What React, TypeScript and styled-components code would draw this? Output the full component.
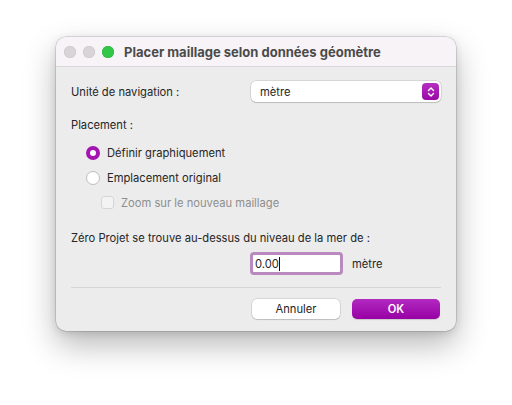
import styled, { createGlobalStyle } from "styled-components";

const Global = createGlobalStyle`
  html, body {
    margin: 0;
    padding: 0;
    background: #ffffff;
  }
  body {
    font-family: Inter, "Liberation Sans", sans-serif;
    -webkit-font-smoothing: antialiased;
  }
`;

const App: React.FC = () => {
  return (
    <>
      <Global />
      <Page>
        <Window>
          <TitleBar>
            <Light color="#d8d5d8" border="#c6c3c6" />
            <Light color="#d8d5d8" border="#c6c3c6" />
            <Light color="#33c748" border="#2aac3c" />
            <Title>Placer maillage selon données géomètre</Title>
          </TitleBar>
          <Body>
            <Row>
              <Label>Unité de navigation :</Label>
              <Select>
                <SelectText>mètre</SelectText>
                <Stepper>
                  <svg width="10" height="12" viewBox="0 0 10 12">
                    <path
                      d="M2.5 4.5 L5 2 L7.5 4.5 M2.5 7.5 L5 10 L7.5 7.5"
                      fill="none"
                      stroke="#fff"
                      strokeWidth="1.4"
                      strokeLinecap="round"
                      strokeLinejoin="round"
                    />
                  </svg>
                </Stepper>
              </Select>
            </Row>
            <Section>Placement :</Section>
            <Option first>
              <Radio checked />
              <OptionText>Définir graphiquement</OptionText>
            </Option>
            <Option>
              <Radio />
              <OptionText>Emplacement original</OptionText>
            </Option>
            <Option indent>
              <Check />
              <OptionText disabled>Zoom sur le nouveau maillage</OptionText>
            </Option>
            <Section top={16}>
              Zéro Projet se trouve au-dessus du niveau de la mer de :
            </Section>
            <InputRow>
              <Field>
                0.00
                <Caret />
              </Field>
              <Unit>mètre</Unit>
            </InputRow>
            <Divider />
            <Buttons>
              <Button>Annuler</Button>
              <Button primary>OK</Button>
            </Buttons>
          </Body>
        </Window>
      </Page>
    </>
  );
};

export default App;

const Page = styled.div`
  width: 512px;
  height: 405px;
  padding: 37px 0 0 56px;
  box-sizing: border-box;
`;

const Window = styled.div`
  width: 400px;
  height: 294px;
  border-radius: 10px;
  background: #ececec;
  overflow: hidden;
  box-shadow: 0 0 0 0.5px rgba(0, 0, 0, 0.22), 0 14px 32px rgba(0, 0, 0, 0.28),
    0 2px 8px rgba(0, 0, 0, 0.12);
`;

const TitleBar = styled.div`
  height: 29px;
  background: #f7f3f7;
  border-bottom: 1px solid #d9d6d9;
  display: flex;
  align-items: center;
  padding-left: 8px;
  gap: 7px;
`;

const Light = styled.span<{ color: string; border: string }>`
  width: 12px;
  height: 12px;
  border-radius: 50%;
  background: ${(p) => p.color};
  box-shadow: inset 0 0 0 0.5px ${(p) => p.border};
`;

const Title = styled.span`
  margin-left: 3px;
  font-size: 13px;
  font-weight: 700;
  color: #4b4b4b;
`;

const Body = styled.div`
  padding: 14px 15px 0 15px;
  display: flex;
  flex-direction: column;
  font-size: 11.2px;
`;

const Row = styled.div`
  display: flex;
  align-items: center;
  justify-content: space-between;
  height: 21px;
`;

const Label = styled.span`
  color: #262626;
`;

const Select = styled.div`
  width: 190px;
  height: 21px;
  box-sizing: border-box;
  background: #ffffff;
  border-radius: 5px;
  box-shadow: 0 0 0 0.5px rgba(0, 0, 0, 0.18), 0 1px 1px rgba(0, 0, 0, 0.12);
  display: flex;
  align-items: center;
  justify-content: space-between;
  padding: 0 2px 0 9px;
`;

const SelectText = styled.span`
  color: #262626;
`;

const Stepper = styled.span`
  width: 17px;
  height: 17px;
  border-radius: 4px;
  background: linear-gradient(#b42fc0, #9a0aa6);
  display: flex;
  align-items: center;
  justify-content: center;
`;

const Section = styled.div<{ top?: number }>`
  margin-top: ${(p) => p.top ?? 16}px;
  color: #262626;
  line-height: 15px;
`;

const Option = styled.div<{ indent?: boolean; first?: boolean }>`
  display: flex;
  align-items: center;
  height: 25px;
  margin-top: ${(p) => (p.first ? 7 : 0)}px;
  padding-left: ${(p) => (p.indent ? 30 : 15)}px;
`;

const Radio = styled.span<{ checked?: boolean }>`
  width: 14px;
  height: 14px;
  box-sizing: border-box;
  border-radius: 50%;
  background: ${(p) => (p.checked ? "#a414b0" : "#ffffff")};
  border: ${(p) => (p.checked ? "none" : "0.5px solid #bdbdbd")};
  display: flex;
  align-items: center;
  justify-content: center;
  &::after {
    content: "";
    display: ${(p) => (p.checked ? "block" : "none")};
    width: 6px;
    height: 6px;
    border-radius: 50%;
    background: #ffffff;
  }
`;

const Check = styled.span`
  width: 13px;
  height: 13px;
  box-sizing: border-box;
  border-radius: 3px;
  background: #f3f3f3;
  border: 0.5px solid #d6d6d6;
`;

const OptionText = styled.span<{ disabled?: boolean }>`
  margin-left: 7px;
  color: ${(p) => (p.disabled ? "#8e8e8e" : "#262626")};
`;

const InputRow = styled.div`
  display: flex;
  align-items: center;
  margin-top: 6px;
  padding-left: 179px;
`;

const Field = styled.div`
  width: 93px;
  height: 23px;
  box-sizing: border-box;
  background: #ffffff;
  border: 3px solid #b98abd;
  border-radius: 4px;
  padding: 0 0 0 2px;
  display: flex;
  align-items: center;
  color: #262626;
`;

const Caret = styled.span`
  width: 1px;
  height: 14px;
  background: #111;
`;

const Unit = styled.span`
  margin-left: 9px;
  color: #262626;
`;

const Divider = styled.div`
  margin-top: 12px;
  height: 1px;
  background: #d6d6d6;
`;

const Buttons = styled.div`
  display: flex;
  justify-content: flex-end;
  gap: 12px;
  margin-top: 11px;
  padding-right: 1px;
`;

const Button = styled.button<{ primary?: boolean }>`
  width: 88px;
  height: 20px;
  border: none;
  border-radius: 5px;
  font-family: Inter, "Liberation Sans", sans-serif;
  font-size: 11.2px;
  font-weight: ${(p) => (p.primary ? 600 : 400)};
  color: ${(p) => (p.primary ? "#ffffff" : "#262626")};
  background: ${(p) =>
    p.primary ? "linear-gradient(#b22ac0, #9800a4)" : "#ffffff"};
  box-shadow: ${(p) =>
    p.primary
      ? "0 1px 1px rgba(0,0,0,0.15)"
      : "0 0 0 0.5px rgba(0,0,0,0.18), 0 1px 1px rgba(0,0,0,0.12)"};
  padding: 0;
`;
